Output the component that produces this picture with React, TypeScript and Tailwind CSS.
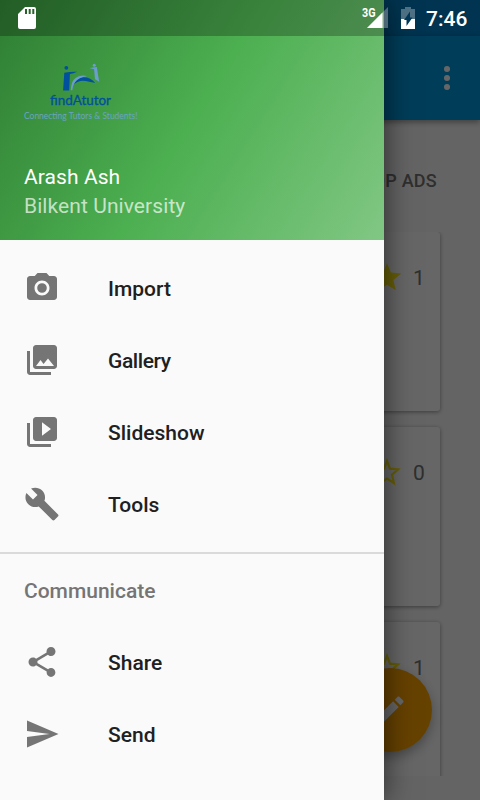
import type { ReactNode } from 'react';

const icons = {
  camera: 'M9 2L7.17 4H4c-1.1 0-2 .9-2 2v12c0 1.1.9 2 2 2h16c1.1 0 2-.9 2-2V6c0-1.1-.9-2-2-2h-3.17L15 2H9zm3 15c-2.76 0-5-2.24-5-5s2.24-5 5-5 5 2.24 5 5-2.24 5-5 5zM12 8.8a3.2 3.2 0 1 0 0 6.4a3.2 3.2 0 1 0 0-6.4z',
  gallery: 'M22 16V4c0-1.1-.9-2-2-2H8c-1.1 0-2 .9-2 2v12c0 1.1.9 2 2 2h12c1.1 0 2-.9 2-2zm-11-4l2.03 2.71L16 11l4 5H8l3-4zM2 6v14c0 1.1.9 2 2 2h14v-2H4V6H2z',
  slideshow: 'M4 6H2v14c0 1.1.9 2 2 2h14v-2H4V6zm16-4H8c-1.1 0-2 .9-2 2v12c0 1.1.9 2 2 2h12c1.1 0 2-.9 2-2V4c0-1.1-.9-2-2-2zm-8 12.5v-9l6 4.5-6 4.5z',
  tools: 'M22.7 19l-9.1-9.1c.9-2.3.4-5-1.5-6.9-2-2-5-2.4-7.4-1.3L9 6 6 9 1.6 4.7C.4 7.1.9 10.1 2.9 12.1c1.9 1.9 4.6 2.4 6.9 1.5l9.1 9.1c.4.4 1 .4 1.4 0l2.3-2.3c.5-.4.5-1.1.1-1.4z',
  share: 'M18 16.08c-.76 0-1.44.3-1.96.77L8.91 12.7c.05-.23.09-.46.09-.7s-.04-.47-.09-.7l7.05-4.11c.54.5 1.25.81 2.04.81 1.66 0 3-1.34 3-3s-1.34-3-3-3-3 1.34-3 3c0 .24.04.47.09.7L8.04 9.81C7.5 9.31 6.79 9 6 9c-1.66 0-3 1.34-3 3s1.34 3 3 3c.79 0 1.5-.31 2.04-.81l7.12 4.16c-.05.21-.08.43-.08.65 0 1.61 1.31 2.92 2.92 2.92 1.61 0 2.92-1.31 2.92-2.92s-1.31-2.92-2.92-2.92z',
  send: 'M2.01 21L23 12 2.01 3 2 10l15 2-15 2z',
  edit: 'M3 17.25V21h3.75L17.81 9.94l-3.75-3.75L3 17.25zM20.71 7.04c.39-.39.39-1.02 0-1.41l-2.34-2.34c-.39-.39-1.02-.39-1.41 0l-1.83 1.83 3.75 3.75 1.83-1.83z',
};

function Icon({ name, className }: { name: keyof typeof icons; className: string }) {
  return (
    <svg viewBox="0 0 24 24" className={className} fill="currentColor">
      <path d={icons[name]} />
    </svg>
  );
}

function MenuItem({ icon, children }: { icon: keyof typeof icons; children: ReactNode }) {
  return (
    <li className="flex h-[72px] items-center gap-12 px-6">
      <Icon name={icon} className="size-9 text-[#757575]" />
      <span className="pt-1 text-[21px] font-medium text-[#202020]">{children}</span>
    </li>
  );
}

function Star({ filled }: { filled?: boolean }) {
  return (
    <svg viewBox="0 0 32 32" className="size-8">
      {filled ? (
        <path fill="#ffeb14" d="M16 1l3.9 9.5 10.4.9-7.9 6.7 2.4 10.1L16 22.7 7.2 28.2l2.4-10.1-7.9-6.7 10.4-.9z" />
      ) : (
        <path fill="none" stroke="#ffeb14" strokeWidth="2.2" d="M16 3.8l3 7.8 8.2.8-6.2 5.2 1.9 8.4L16 21.5 9.1 26l1.9-8.4-6.2-5.2 8.2-.8z" />
      )}
    </svg>
  );
}

function AdCard({ count, filled }: { count: number; filled?: boolean }) {
  return (
    <div className="flex h-[179px] shrink-0 justify-end rounded-[3px] bg-white pr-[15px] pt-[30px] shadow-[0_1px_4px_rgba(0,0,0,0.4)]">
      <div className="flex h-8 items-center gap-[10px]">
        <Star filled={filled} />
        <span className="w-[12px] pt-0.5 text-[21px] text-[#757575]">{count}</span>
      </div>
    </div>
  );
}

function Logo() {
  return (
    <svg viewBox="0 0 116 66" className="block h-[66px] w-[116px]">
      <g fill="#00509e">
        <circle cx="42.3" cy="7.8" r="1.9" />
        <path d="M40.3 12.8q6-1.2 12.8-1-3.8 1.8-7.2 2.1L45.2 30.4h-6.1z" />
        <path d="M48.3 24.4q2.9-5.2 9.7-7 8.5-.6 13.2 5.7-3.4-.8-6-1.3-9.5-3.2-15.1 2.4z" />
      </g>
      <g fill="#6c9dd0">
        <circle cx="70.2" cy="5.3" r="1.5" />
        <path d="M65.4 8l7.400-.9 2.400 14.600-4.200-2.500-.9-9.900z" />
        <path d="M46.8 30.2q.3-13.200 10.400-14.500 3.900-.4 5.800.6-8.500 1.100-11.900 6-2.700 3.500-2.800 7.900z" />
      </g>
      <text x="26" y="44.5" textLength="61" lengthAdjust="spacingAndGlyphs" fill="#00509e" stroke="#00509e" strokeWidth=".3" fontFamily="Lato, sans-serif" fontWeight="400" fontSize="13">findAtutor</text>
      <text x="0" y="59" textLength="113.5" lengthAdjust="spacingAndGlyphs" fill="#6ba3c4" fontFamily="Lato, sans-serif" fontWeight="400" fontSize="8.5">Connecting Tutors &amp; Students!</text>
    </svg>
  );
}

function StatusBar() {
  return (
    <div className="absolute inset-x-0 top-0 flex h-9 items-center justify-between text-white">
      <svg viewBox="0 0 18 22" className="ml-[18px] h-[22px] w-[18px]">
        <path fill="currentColor" fillRule="evenodd" d="M7 0h9a2 2 0 0 1 2 2v18a2 2 0 0 1-2 2H2a2 2 0 0 1-2-2V7zM7 2v5h2V2zm3.7 0v5h2V2zm3.6 0v5h2V2z" />
      </svg>
      <div className="flex items-center pr-[11px]">
        <svg viewBox="0 0 27 24" className="h-6 w-[27px]">
          <path fill="#fff" fillOpacity=".3" d="M26 1v21H5z" />
          <path fill="#fff" d="M20.5 6.5V22H5z" />
          <text x="0" y="11" fill="#fff" fontFamily="Roboto, sans-serif" fontWeight="700" fontSize="13" textLength="13.5" lengthAdjust="spacingAndGlyphs">3G</text>
        </svg>
        <svg viewBox="0 0 14 22" className="ml-3 h-[22px] w-[14px]">
          <path fill="#fff" fillOpacity=".3" d="M4 0h6v2h4v10H0V2h4z" />
          <path fill="#fff" d="M0 12h14v10H0z" />
          <path fill="#003756" d="M9 4.500v6h2.500L5.500 19v-6H3z" />
        </svg>
        <span className="ml-[11px] w-[43px] whitespace-nowrap pt-0.5 text-[21px] font-medium leading-6">7:46</span>
      </div>
    </div>
  );
}

export default function App() {
  return (
    <div className="relative h-[800px] w-[480px] overflow-hidden bg-[#fafafa] font-['Roboto',sans-serif]">
      <main className="isolate flex h-full flex-col">
        <div className="h-9 shrink-0 bg-[#0082c8]" />
        <header className="z-10 flex h-[84px] shrink-0 items-center justify-end bg-[#0099df] pr-[30px] shadow-[0_2px_6px_rgba(0,0,0,0.4)]">
          <div className="flex flex-col gap-[3px]">
            <i className="size-1.5 rounded-full bg-white" />
            <i className="size-1.5 rounded-full bg-white" />
            <i className="size-1.5 rounded-full bg-white" />
          </div>
        </header>
        <div className="flex h-[112px] shrink-0 items-center justify-end pr-[43px] pt-2 text-[18px] font-medium tracking-[0.25px] text-[#757575]">TOP ADS</div>
        <section className="flex h-[544px] flex-col gap-4 overflow-hidden px-10">
          <AdCard count={1} filled />
          <AdCard count={0} />
          <AdCard count={1} />
        </section>
      </main>
      <button className="absolute left-[348px] top-[668px] flex size-[84px] items-center justify-center rounded-full bg-[#ffa500] text-white shadow-[0_5px_12px_rgba(0,0,0,0.3)]">
        <Icon name="edit" className="size-9" />
      </button>
      <div className="absolute inset-0 bg-black/60" />
      <aside className="absolute inset-y-0 left-0 flex w-96 flex-col bg-[#fafafa] shadow-[0_0_28px_rgba(0,0,0,0.6)]">
        <div className="flex h-60 shrink-0 flex-col bg-[linear-gradient(122deg,#2e7d32,#4caf50_50%,#81c784)]">
          <div className="h-9 shrink-0 bg-black/25" />
          <div className="pl-6 pt-6"><Logo /></div>
          <div className="pl-6 pt-[37px] text-[21px] leading-7 tracking-[0.08px]">
            <div className="text-white">Arash Ash</div>
            <div className="pt-px text-white/70">Bilkent University</div>
          </div>
        </div>
        <ul className="shrink-0 pt-3">
          <MenuItem icon="camera">Import</MenuItem>
          <MenuItem icon="gallery"><span className="tracking-[-0.4px]">Gallery</span></MenuItem>
          <MenuItem icon="slideshow">Slideshow</MenuItem>
          <MenuItem icon="tools">Tools</MenuItem>
        </ul>
        <div className="mt-3 h-0.5 shrink-0 bg-[#dadada]" />
        <h2 className="flex h-[72px] shrink-0 items-center px-6 pt-1 text-[21px] font-medium text-[#757575]">Communicate</h2>
        <ul>
          <MenuItem icon="share">Share</MenuItem>
          <MenuItem icon="send">Send</MenuItem>
        </ul>
      </aside>
      <StatusBar />
    </div>
  );
}
